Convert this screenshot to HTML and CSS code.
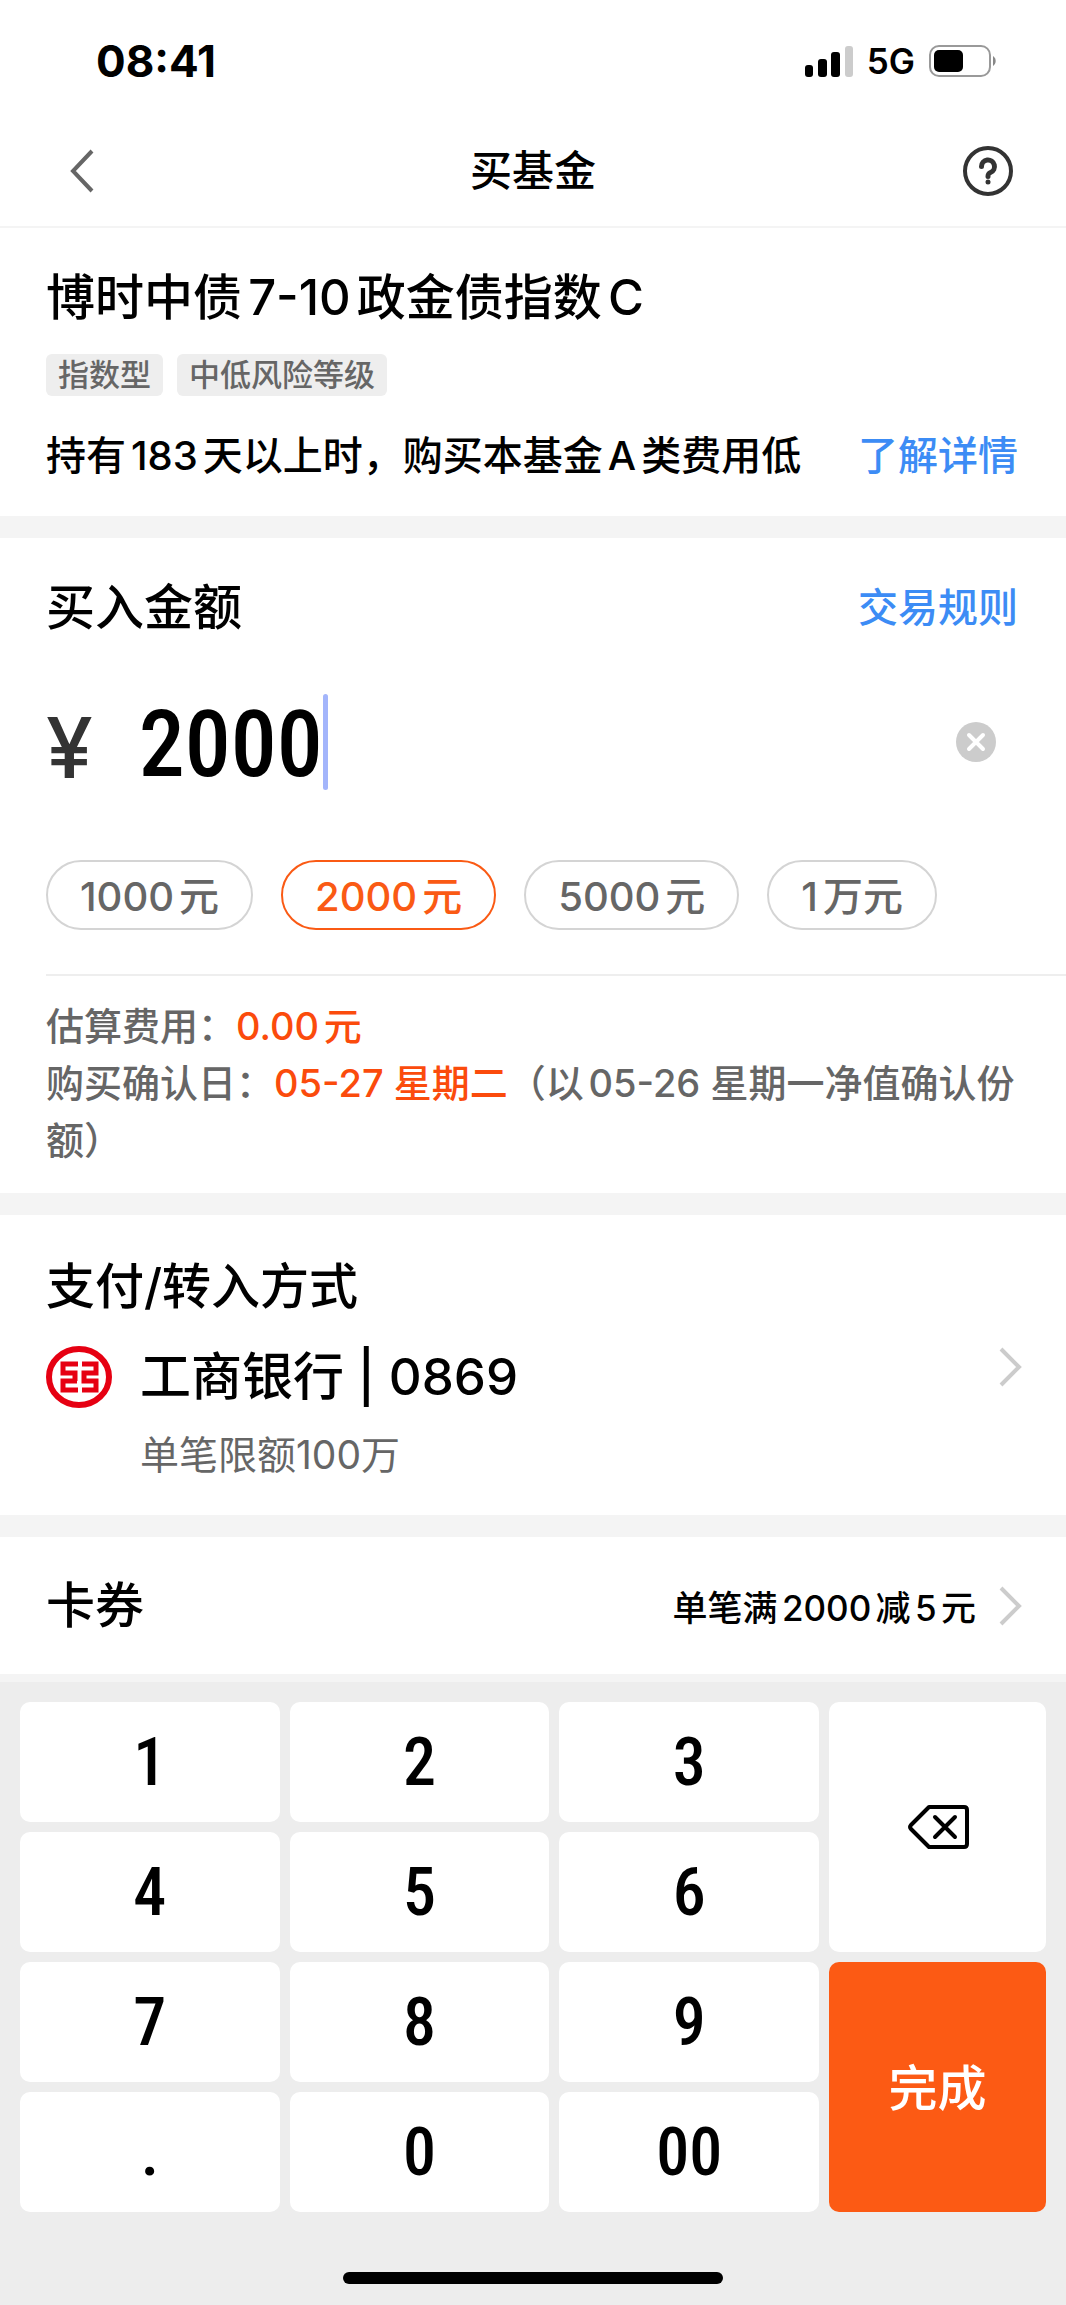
FILE: index.html
```html
<!DOCTYPE html>
<html lang="zh-CN">
<head>
    <meta charset="UTF-8">
    <meta name="viewport" content="width=device-width, initial-scale=1.0">
    <title>买基金</title>
    <link rel="stylesheet" href="styles.css">
</head>
<body>
    <div class="status-bar">
        <span class="time">08:41</span>
        <div class="status-icons">
            <svg width="50" height="32" viewBox="0 0 50 32">
                <rect x="1" y="20" width="8" height="12" rx="3"/>
                <rect x="14" y="14" width="9" height="18" rx="3"/>
                <rect x="27" y="7" width="9" height="25" rx="3"/>
                <rect x="41" y="1" width="8" height="31" rx="3" fill="#ccc"/>
            </svg>
            <span class="network">5G</span>
            <svg width="70" height="34" viewBox="0 0 70 34">
                <rect x="2" y="2" width="60" height="30" rx="9" fill="none" stroke="#999" stroke-width="2"/>
                <rect x="6" y="6" width="29" height="22" rx="5"/>
                <path d="M65 12a6 6 0 0 1 0 10z" fill="#888"/>
            </svg>
        </div>
    </div>

    <header class="nav">
        <button class="icon-btn" aria-label="返回">
            <svg width="26" height="46" viewBox="0 0 26 46"><path d="M24 3L5 23l19 20" fill="none" stroke="#666" stroke-width="4"/></svg>
        </button>
        <h1>买基金</h1>
        <button class="icon-btn" aria-label="帮助">
            <svg width="52" height="52" viewBox="0 0 52 52" fill="none" stroke="#333" stroke-width="4">
                <circle cx="26" cy="26" r="23"/>
                <path d="M19.500 21.500a6.500 6.500 0 1 1 9 6c-2 .8-2.500 1.500-2.500 4" stroke-width="5" stroke-linecap="round"/>
                <circle cx="26" cy="37" r="2.500" fill="#333" stroke="none"/>
            </svg>
        </button>
    </header>

    <main>
        <section class="fund">
            <h2>博时中债7-10政金债指数C</h2>
            <div class="tags">
                <span class="tag">指数型</span>
                <span class="tag">中低风险等级</span>
            </div>
            <div class="row notice">
                <span>持有183天以上时，购买本基金A类费用低</span>
                <a href="#">了解详情</a>
            </div>
        </section>

        <section class="amount">
            <div class="row">
                <h2>买入金额</h2>
                <a href="#">交易规则</a>
            </div>
            <div class="amount-field">
                <label for="amount">¥</label>
                <input type="text" id="amount" inputmode="decimal" size="4" value="2000">
                <span class="caret"></span>
                <button class="icon-btn clear" aria-label="清除">
                    <svg width="40" height="40" viewBox="0 0 40 40">
                        <circle cx="20" cy="20" r="20" fill="#ccc"/>
                        <path d="M13 13l14 14M27 13L13 27" stroke="#fff" stroke-width="4" stroke-linecap="round"/>
                    </svg>
                </button>
            </div>
            <div class="chips">
                <button class="chip">1000元</button>
                <button class="chip active">2000元</button>
                <button class="chip">5000元</button>
                <button class="chip">1万元</button>
            </div>
            <div class="estimate">
                <p>估算费用：<strong>0.00元</strong></p>
                <p>购买确认日：<strong>05-27 星期二</strong>（以05-26 星期一净值确认份额）</p>
            </div>
        </section>

        <section class="payment">
            <h2>支付/转入方式</h2>
            <div class="bank">
                <svg class="bank-logo" width="66" height="64" viewBox="0 0 66 64">
                    <ellipse cx="33" cy="32" rx="30" ry="28" fill="none" stroke="#e60012" stroke-width="6"/>
                    <g fill="none" stroke="#e60012" stroke-width="5">
                        <path d="M32 19H17v9h12v8M32 36v0M31 36H17v9h15"/>
                        <path d="M36 19h14v9H38v8h12v9H36"/>
                    </g>
                </svg>
                <div class="bank-info">
                    <div class="bank-name">工商银行 | 0869</div>
                    <div class="bank-limit">单笔限额100万</div>
                </div>
                <svg class="arrow" width="26" height="42" viewBox="0 0 26 42"><path d="M3 3l18 18L3 39" fill="none" stroke="#ccc" stroke-width="4"/></svg>
            </div>
        </section>

        <section class="coupon">
            <h2>卡券</h2>
            <span class="coupon-text">单笔满2000减5元</span>
            <svg class="arrow" width="26" height="42" viewBox="0 0 26 42"><path d="M3 3l18 18L3 39" fill="none" stroke="#ccc" stroke-width="4"/></svg>
        </section>
    </main>

    <div class="keyboard">
        <div class="keys">
            <button>1</button>
            <button>2</button>
            <button>3</button>
            <button class="delete" aria-label="删除">
                <svg width="62" height="46" viewBox="0 0 62 46" fill="none" stroke="#000" stroke-width="4" stroke-linejoin="round">
                    <path d="M22 3h35q3 0 3 3v34q0 3-3 3H22L4 25q-2-2 0-4z"/>
                    <path d="M28 13l20 20M48 13L28 33" stroke-linecap="round"/>
                </svg>
            </button>
            <button>4</button>
            <button>5</button>
            <button>6</button>
            <button>7</button>
            <button>8</button>
            <button>9</button>
            <button class="done">完成</button>
            <button>.</button>
            <button>0</button>
            <button>00</button>
        </div>
        <div class="home-bar"></div>
    </div>
</body>
</html>
```
FILE: styles.css
```css
* {
    box-sizing: border-box;
}
body {
    margin: 0;
    min-height: 100vh;
    display: flex;
    flex-direction: column;
    background-color: #f4f4f4;
    color: #000;
    font-family: Inter, "Noto Sans CJK SC", sans-serif;
    font-weight: 500;
    text-autospace: normal;
}
h1, h2, p {
    margin: 0;
}
button {
    border: none;
    padding: 0;
    font-family: inherit;
    font-weight: inherit;
    cursor: pointer;
}
svg {
    display: block;
}
a {
    color: #3c8cf5;
    text-decoration: none;
}
.status-bar {
    display: flex;
    justify-content: space-between;
    align-items: center;
    padding: 30px 68px 0 96px;
    background-color: #fff;
}
.time {
    font-size: 44px;
    line-height: 62px;
    font-weight: 700;
}
.status-icons {
    display: flex;
    align-items: center;
    gap: 13px;
}
.network {
    font-size: 35px;
    font-weight: 600;
}
.nav {
    display: flex;
    justify-content: space-between;
    align-items: center;
    height: 136px;
    padding: 24px 52px 0 68px;
    background-color: #fff;
    border-bottom: 2px solid #f4f4f4;
}
.nav h1 {
    flex: 1;
    padding-left: 10px;
    text-align: center;
    font-size: 42px;
    line-height: 60px;
    font-weight: 500;
}
.icon-btn {
    background: none;
}
section {
    margin-bottom: 22px;
    padding: 0 48px 0 46px;
    background-color: #fff;
}
h2 {
    font-size: 49px;
    line-height: 72px;
    font-weight: 500;
}
.row {
    display: flex;
    justify-content: space-between;
    align-items: center;
    font-size: 40px;
    line-height: 60px;
}
.fund {
    padding-top: 34px;
    padding-bottom: 30px;
}
.tags {
    display: flex;
    gap: 14px;
    margin: 20px 0 30px;
}
.tag {
    padding: 0 12px;
    font-size: 31px;
    line-height: 42px;
    color: #666;
    background-color: #eee;
    border-radius: 6px;
}
.amount {
    padding-top: 34px;
    padding-bottom: 24px;
}
.amount-field {
    display: flex;
    align-items: center;
    height: 96px;
    margin: 50px 22px 70px 0;
}
.amount-field label {
    margin-right: 40px;
    padding-top: 12px;
    font-size: 84px;
    line-height: 80px;
    font-weight: 500;
    color: #333;
}
.amount-field input {
    field-sizing: content;
    margin-left: 6px;
    padding: 4px 0 0;
    border: none;
    outline: none;
    font-family: "Roboto Condensed", Roboto, sans-serif;
    font-size: 92px;
    line-height: 92px;
    font-weight: 500;
    color: #000;
}
.caret {
    width: 5px;
    height: 96px;
    border-radius: 3px;
    background-color: #a3b5fb;
}
.clear {
    margin-left: auto;
}
.chips {
    display: flex;
    gap: 28px;
}
.chip {
    height: 70px;
    padding: 0 32px 2px;
    border: 2px solid #d4d4d4;
    border-radius: 35px;
    font-size: 40px;
    color: #666;
    background-color: #fff;
}
.chip.active {
    color: #fa5a14;
    border-color: #fa5a14;
}
.estimate {
    margin: 44px -48px 0 0;
    padding: 22px 48px 0 0;
    border-top: 2px solid #eee;
    font-size: 38px;
    line-height: 57px;
    color: #666;
}
.estimate strong {
    font-weight: 500;
    color: #fb4b0c;
}
.payment {
    padding-top: 36px;
    padding-bottom: 36px;
}
.bank {
    display: flex;
    align-items: flex-start;
    text-autospace: no-autospace;
}
.bank-logo {
    margin: 22px 28px 0 0;
}
.bank-info {
    flex: 1;
}
.bank-name {
    font-size: 51px;
    line-height: 108px;
}
.bank-limit {
    font-size: 39px;
    line-height: 48px;
    font-weight: 400;
    color: #666;
}
.arrow {
    margin-right: -6px;
}
.bank .arrow {
    margin-top: 23px;
}
.coupon {
    display: flex;
    align-items: center;
    min-height: 137px;
    margin-bottom: 8px;
}
.coupon-text {
    margin: 0 22px 0 auto;
    font-size: 35px;
}
.keyboard {
    flex: 1;
    display: flex;
    flex-direction: column;
    justify-content: space-between;
    padding: 20px 20px 21px;
    background-color: #ededed;
}
.keys {
    display: grid;
    grid-template-columns: 260fr 260fr 260fr 217fr;
    grid-auto-rows: 120px;
    gap: 10px;
}
.keys button {
    border-radius: 10px;
    background-color: #fff;
    color: #000;
    font-family: "Roboto Condensed", Roboto, sans-serif;
    font-size: 66px;
    font-weight: 500;
}
.keys .delete,
.keys .done {
    grid-column: 4;
    grid-row: span 2;
}
.keys .delete svg {
    margin: 0 auto;
}
.keys .done {
    padding-bottom: 6px;
    font-family: inherit;
    font-size: 49px;
    font-weight: 500;
    color: #fff;
    background-color: #fc5a14;
}
.home-bar {
    align-self: center;
    width: 37%;
    height: 12px;
    border-radius: 6px;
    background-color: #000;
}
```
